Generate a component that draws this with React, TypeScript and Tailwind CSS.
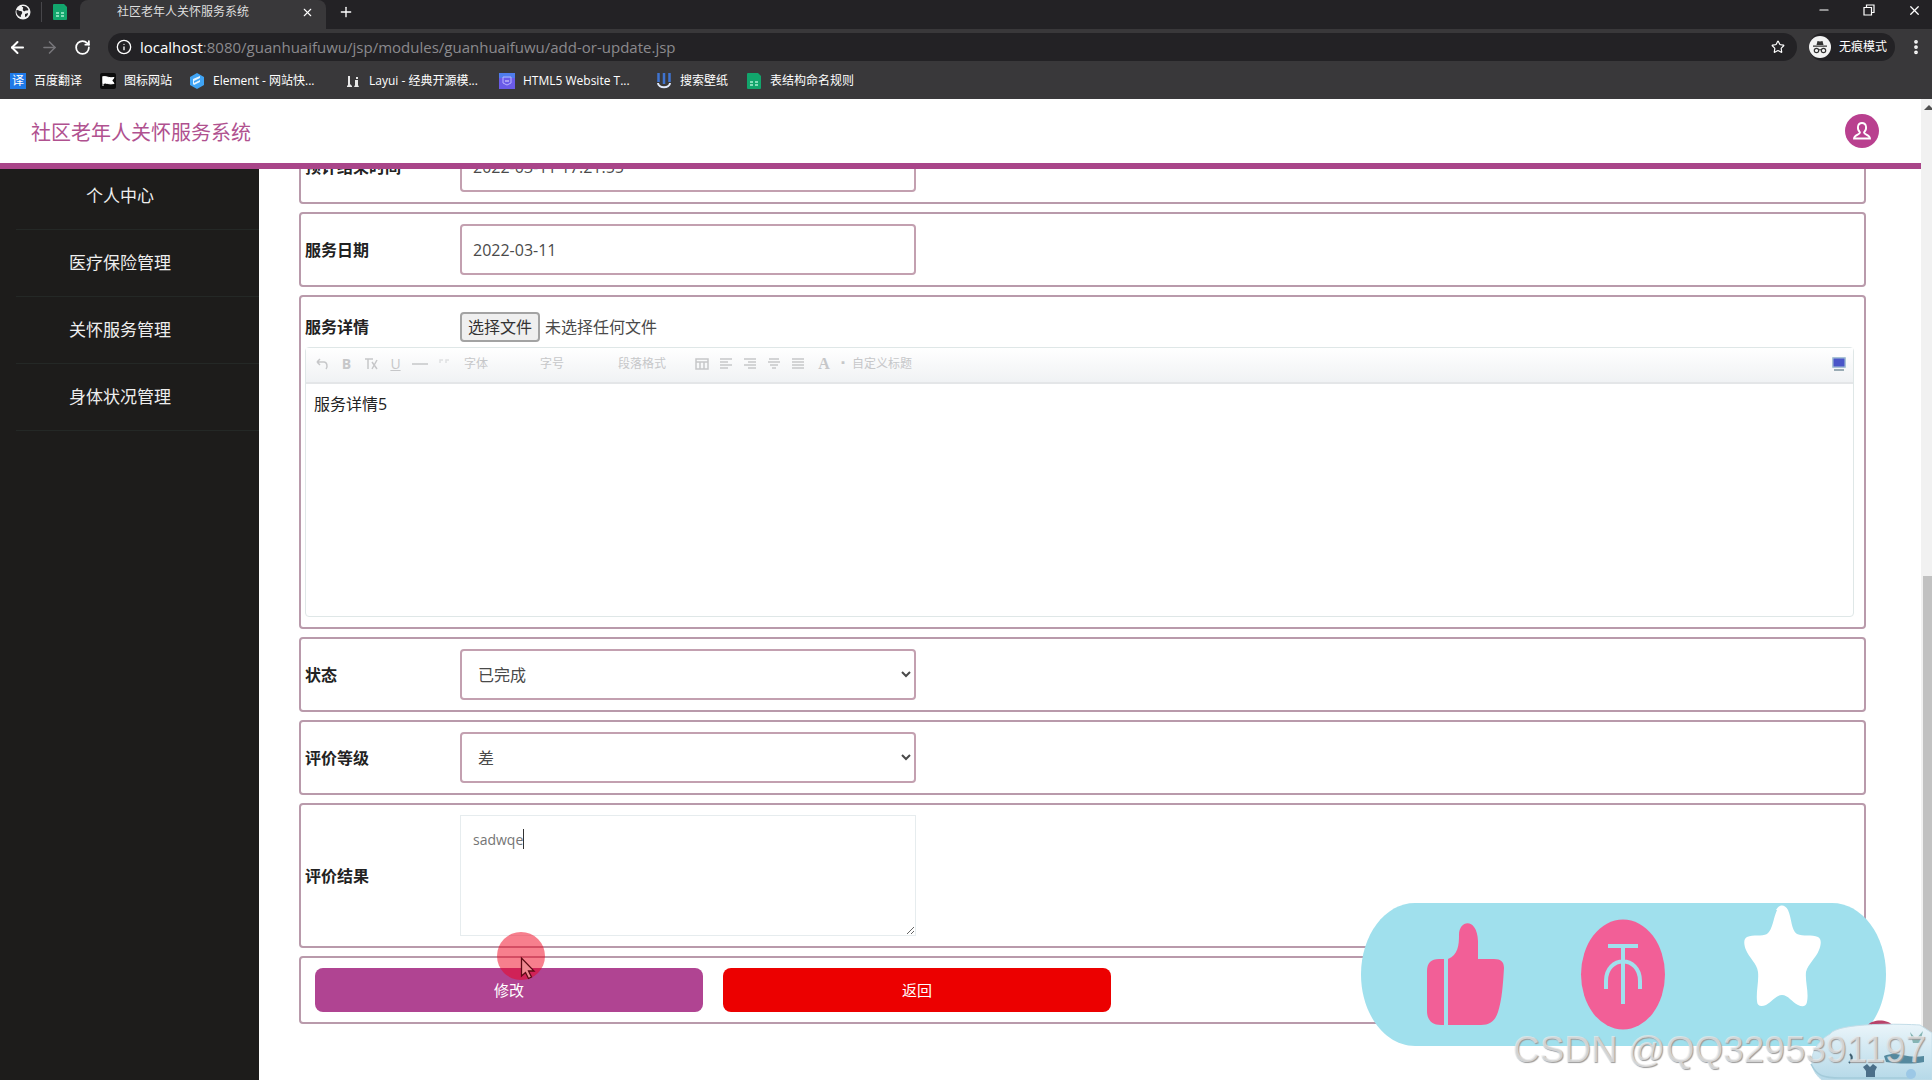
import { useRef } from 'react';
import type { ReactNode } from 'react';
import { ArrowLeft, ArrowRight, Info, Minus, MoreVertical, Plus, RotateCw, Star, X } from 'lucide-react';

const menu = ['个人中心', '医疗保险管理', '关怀服务管理', '身体状况管理'];

const card = 'rounded border-2 border-[#b99aab] bg-white';
const field =
  'h-[51px] w-[456px] rounded border-2 border-[#c3a0b0] bg-white text-base text-[#4a4a4a] outline-none';

function SheetIcon() {
  return (
    <svg viewBox="0 0 16 18" className="h-[18px] w-4 shrink-0">
      <path d="M2 1h10l3 3v12a1 1 0 0 1-1 1H2a1 1 0 0 1-1-1V2a1 1 0 0 1 1-1z" fill="#12a56c" />
      <path d="M4 10h3M9 10h3M4 13h3M9 13h3" stroke="#a8f0cf" strokeWidth="1.5" />
    </svg>
  );
}

function GlobeIcon() {
  return (
    <svg viewBox="0 0 16 16" className="h-4 w-4 shrink-0">
      <circle cx="8" cy="8" r="7.5" fill="#f1f1f1" />
      <path d="M1.500 6c2-.5 2.500 1 4 1s2 1 1.500 2.500-1.500 1-1 3.500C3 12.500 1 10 1.500 6z" fill="#242326" />
      <path d="M7 2c3-.5 5.500 1 6.500 4-1.500 1-2.500 0-3.500 1S7 6 8 4.500 6 3 7 2z" fill="#242326" />
      <path d="M10 10l3-1c0 2-1 3.500-3 4z" fill="#242326" />
    </svg>
  );
}

const bookmarks: { text: string; width: string; icon: ReactNode }[] = [
  {
    text: '百度翻译',
    width: 'w-[90px]',
    icon: (
      <span className="flex h-4 w-4 shrink-0 items-center justify-center bg-[#1f7ae8] text-xs leading-none text-white">
        译
      </span>
    ),
  },
  {
    text: '图标网站',
    width: 'w-[89px]',
    icon: (
      <svg viewBox="0 0 16 16" className="h-4 w-4 shrink-0">
        <rect width="16" height="16" rx="2" fill="#0c0c0c" />
        <path d="M3 3v10M3 4c3-1.500 5 1.500 11 .5l-2 3 2 3c-5 1.500-8-1.500-11 0z" fill="#fff" stroke="#fff" />
      </svg>
    ),
  },
  {
    text: 'Element - 网站快...',
    width: 'w-[156px]',
    icon: (
      <svg viewBox="0 0 16 16" className="h-4 w-4 shrink-0">
        <path d="M8 0l7 4v8l-7 4-7-4V4z" fill="#3fa4f5" />
        <path d="M4 6l7-3v2L5 8v2l6-3v2l-6 3-1-1z" fill="#e4f3ff" />
      </svg>
    ),
  },
  {
    text: 'Layui - 经典开源模...',
    width: 'w-[154px]',
    icon: (
      <svg viewBox="0 0 16 16" className="h-4 w-4 shrink-0">
        <path d="M3 3h2v8l2 2v1H2v-1l1-1zM11 4h2v2h-2zM10 7h3v5l1 2H9l1-2z" fill="#e8e8e8" />
      </svg>
    ),
  },
  {
    text: 'HTML5 Website T...',
    width: 'w-[157px]',
    icon: (
      <svg viewBox="0 0 16 16" className="h-4 w-4 shrink-0">
        <rect width="16" height="16" fill="#6a5be8" />
        <path d="M0 0h16v5H0z" fill="#4f7cec" />
        <path d="M4 4h8v6l-4 2-4-2z" fill="none" stroke="#b9b2ff" />
        <path d="M6 8h4" stroke="#e6e2ff" />
      </svg>
    ),
  },
  {
    text: '搜索壁纸',
    width: 'w-[90px]',
    icon: (
      <svg viewBox="0 0 16 16" className="h-4 w-4 shrink-0">
        <path d="M2.500 0v9M8 0v11M13.500 0v9" stroke="#3f73d0" strokeWidth="2.500" />
        <path d="M2 10c0 5.500 12 5.500 12 0" fill="none" stroke="#dfe8fa" strokeWidth="2" />
      </svg>
    ),
  },
  { text: '表结构命名规则', width: 'w-[120px]', icon: <SheetIcon /> },
];

function BrowserChrome() {
  return (
    <div className="shrink-0 bg-[#39383a] text-white">
      <div className="flex h-[29px] items-start bg-[#232225]">
        <div className="flex h-6 w-20 items-center gap-[10px] pl-[15px]">
          <GlobeIcon />
          <span className="h-5 w-px bg-[#47464a]" />
          <SheetIcon />
        </div>
        <div className="flex h-[29px] w-[246px] items-start rounded-t-lg bg-[#39383a] pr-3 pl-[37px]">
          <span className="flex h-6 flex-1 items-center text-xs text-[#dedede]">社区老年人关怀服务系统</span>
          <button type="button" aria-label="关闭标签页" className="flex h-6 items-center">
            <X size={13} />
          </button>
        </div>
        <button type="button" aria-label="新标签页" className="ml-3 flex h-6 items-center">
          <Plus size={16} />
        </button>
        <div className="ml-auto flex h-5 items-center gap-8 pr-[10px]">
          <button type="button" aria-label="最小化">
            <Minus size={14} strokeWidth={2} />
          </button>
          <button type="button" aria-label="还原">
            <svg viewBox="0 0 12 12" className="h-3 w-3" fill="none" stroke="currentColor" strokeWidth="1.200">
              <path d="M1 3.500h7.500V11H1zM3.500 3.500V1H11v7.500H8.500" />
            </svg>
          </button>
          <button type="button" aria-label="关闭">
            <X size={15} strokeWidth={2} />
          </button>
        </div>
      </div>

      <div className="flex h-9 items-center pr-[7px] pl-2">
        <button type="button" aria-label="后退" className="w-8">
          <ArrowLeft size={19} strokeWidth={2.5} />
        </button>
        <button type="button" aria-label="前进" className="w-8 text-[#77767a]">
          <ArrowRight size={19} strokeWidth={2} />
        </button>
        <button type="button" aria-label="重新加载" className="w-9 pl-0.5">
          <RotateCw size={17} strokeWidth={2.5} />
        </button>
        <div className="flex h-7 flex-1 items-center rounded-full bg-[#232225] pr-3 pl-2 text-[15px]">
          <Info size={16} strokeWidth={2} className="mr-2 shrink-0" />
          <label htmlFor="address">localhost</label>
          <input
            id="address"
            readOnly
            value=":8080/guanhuaifuwu/jsp/modules/guanhuaifuwu/add-or-update.jsp"
            className="min-w-0 flex-1 bg-transparent text-[#8b8a8e] outline-none"
          />
          <button type="button" aria-label="收藏">
            <Star size={14} strokeWidth={2} />
          </button>
        </div>
        <div className="ml-3 flex h-7 w-[86px] items-center gap-2 rounded-full bg-[#232225] text-xs whitespace-nowrap">
          <svg viewBox="0 0 22 22" className="h-[22px] w-[22px] shrink-0">
            <circle cx="11" cy="11" r="11" fill="#f3f3f3" />
            <path d="M7.500 9l1-4 2.500.6L13.500 5l1 4zM4 9.600h14v1.200H4z" fill="#333" />
            <circle cx="7.500" cy="14.500" r="2.200" fill="none" stroke="#333" strokeWidth="1.200" />
            <circle cx="14.500" cy="14.500" r="2.200" fill="none" stroke="#333" strokeWidth="1.200" />
            <path d="M9.700 14q1.300-.8 2.600 0" fill="none" stroke="#333" />
          </svg>
          无痕模式
        </div>
        <button type="button" aria-label="更多" className="ml-3">
          <MoreVertical size={18} strokeWidth={3} />
        </button>
      </div>

      <nav className="flex h-[34px] items-start pl-[10px]">
        {bookmarks.map((b) => (
          <a key={b.text} href="#" className={`flex h-8 items-center gap-2 text-xs whitespace-nowrap ${b.width}`}>
            {b.icon}
            {b.text}
          </a>
        ))}
      </nav>
    </div>
  );
}

function Row({ id, label, children }: { id: string; label: string; children: ReactNode }) {
  return (
    <div className={`flex items-center py-[10px] pl-1 ${card}`}>
      <label htmlFor={id} className="w-[155px] shrink-0 text-base font-bold text-[#222]">
        {label}
      </label>
      {children}
    </div>
  );
}

function ToolButton({ label, children }: { label: string; children: ReactNode }) {
  return (
    <button type="button" aria-label={label} className="flex h-6 w-6 shrink-0 items-center justify-center">
      <svg viewBox="0 0 16 16" className="h-4 w-4" fill="none" stroke="currentColor" strokeWidth="1.500">
        {children}
      </svg>
    </button>
  );
}

function Editor() {
  return (
    <div className="mr-[10px] rounded border border-[#dfe7e7]">
      <div className="flex h-9 items-center border-b-2 border-[#e4e6e8] bg-linear-to-b from-white to-[#f0f2f4] pr-[6px] pb-[3px] pl-1 text-[#c6c7c9]">
        <ToolButton label="撤销">
          <path d="M3 6h7a3 4 0 0 1 2 7M3 6l3-3M3 6l3 3" />
        </ToolButton>
        <button type="button" className="h-6 w-[25px] shrink-0 text-sm font-bold">
          B
        </button>
        <ToolButton label="清除格式">
          <path d="M2 3h8M5 3v10M9 6l5 7M14 4l-5 9" />
        </ToolButton>
        <button type="button" className="h-6 w-[25px] shrink-0 text-sm underline">
          U
        </button>
        <ToolButton label="分隔线">
          <path d="M0 8h16" />
        </ToolButton>
        <ToolButton label="引用">
          <path d="M4 7V4h3M10 7V4h3" opacity=".5" />
        </ToolButton>
        <select aria-label="字体" className="ml-2 w-[76px] shrink-0 appearance-none text-xs">
          <option>字体</option>
        </select>
        <select aria-label="字号" className="w-[78px] shrink-0 appearance-none text-xs">
          <option>字号</option>
        </select>
        <select aria-label="段落格式" className="w-[72px] shrink-0 appearance-none text-xs">
          <option>段落格式</option>
        </select>
        <ToolButton label="日期">
          <path d="M2 3h12v10H2zM2 6h12M6 6v7M10 6v7" />
        </ToolButton>
        <ToolButton label="左对齐">
          <path d="M2 3h12M2 6h8M2 9h12M2 12h8" />
        </ToolButton>
        <ToolButton label="右对齐">
          <path d="M2 3h12M6 6h8M2 9h12M6 12h8" />
        </ToolButton>
        <ToolButton label="居中">
          <path d="M3 3h10M2 6h12M4 9h8M6 12h4" />
        </ToolButton>
        <ToolButton label="两端对齐">
          <path d="M2 3h12M2 6h12M2 9h12M2 12h12" />
        </ToolButton>
        <button type="button" className="h-6 w-7 shrink-0 font-['Liberation_Serif',serif] text-base font-bold">
          A
        </button>
        <span className="w-[14px] shrink-0 text-[10px]">▪</span>
        <button type="button" className="shrink-0 text-xs whitespace-nowrap">
          自定义标题
        </button>
        <button type="button" aria-label="全屏" className="ml-auto">
          <svg viewBox="0 0 16 16" className="h-4 w-4">
            <rect x="1" y="1" width="14" height="11" rx="1" fill="#a9c3d6" />
            <rect x="2.500" y="2.500" width="11" height="8" fill="#4a56c8" />
            <path d="M3 14h10" stroke="#9aacb5" strokeWidth="2" />
          </svg>
        </button>
      </div>
      <textarea
        aria-label="服务详情内容"
        defaultValue="服务详情5"
        className="block h-[232px] w-full resize-none px-2 py-2 text-base leading-6 text-[#222] outline-none"
      />
    </div>
  );
}

function ServiceForm() {
  const file = useRef<HTMLInputElement>(null);

  return (
    <form className="-mt-10 flex flex-col gap-2">
      <Row id="end" label="预计结束时间">
        <input id="end" defaultValue="2022-03-11 17:21:55" className={`${field} px-[11px]`} />
      </Row>
      <Row id="date" label="服务日期">
        <input id="date" defaultValue="2022-03-11" className={`${field} px-[11px]`} />
      </Row>

      <div className={`pt-[15px] pb-[10px] pl-1 ${card}`}>
        <div className="mb-[5px] flex h-[30px] items-center text-base text-[#4a4a4a]">
          <label htmlFor="file" className="w-[155px] shrink-0 font-bold text-[#222]">
            服务详情
          </label>
          <input ref={file} id="file" type="file" className="hidden" />
          <button
            type="button"
            onClick={() => file.current?.click()}
            className="mr-[5px] h-[30px] rounded-sm border-2 border-[#a3a3a3] bg-[#efefef] px-[6px] leading-none text-[#333]"
          >
            选择文件
          </button>
          未选择任何文件
        </div>
        <Editor />
      </div>

      <Row id="state" label="状态">
        <select id="state" className={`${field} pl-3`}>
          <option>已完成</option>
        </select>
      </Row>
      <Row id="grade" label="评价等级">
        <select id="grade" className={`${field} pl-3`}>
          <option>差</option>
        </select>
      </Row>
      <Row id="result" label="评价结果">
        <div className="relative">
          <textarea
            id="result"
            defaultValue="sadwqe"
            className="block h-[121px] w-[456px] border border-[#e6ecee] px-3 py-[14px] text-sm text-[#757575] outline-none"
          />
          <span className="absolute top-[14px] left-[63px] h-5 w-px bg-[#333]" />
        </div>
      </Row>

      <div className={`relative flex gap-5 py-[10px] pl-[14px] ${card}`}>
        <button type="button" className="h-11 w-[388px] rounded-lg bg-[#b04492] text-[15px] text-white">
          修改
        </button>
        <button type="button" className="h-11 w-[388px] rounded-lg bg-[#ec0000] text-[15px] text-white">
          返回
        </button>
        {/* click highlight and pointer */}
        <svg viewBox="0 0 48 48" className="pointer-events-none absolute -top-[26px] left-[196px] h-12 w-12">
          <circle cx="24" cy="24" r="24" fill="#f0001c" fillOpacity=".5" />
          <path
            d="M24.500 26v18l4-3.500 3 6 3-1.500-3-6h5.500z"
            fill="#f08a92"
            stroke="#5c0a14"
            strokeWidth="1.300"
          />
        </svg>
      </div>
    </form>
  );
}

function LikeBanner() {
  return (
    <svg viewBox="0 0 525 143" className="absolute right-[46px] bottom-[34px] h-[143px] w-[525px]">
      <path d="M54 0H471C501 0 525 32 525 71.500S501 143 471 143H54C24 143 0 111 0 71.500S24 0 54 0z" fill="#a0e0ed" />
      <path
        d="M66 68c0-8 4-12 12-12h5v66h-3c-9 0-14-5-14-14zM87 122V56c10-4 11-14 11-24 0-15 18-18 19 6v18h16c7 0 10 3 10 9-1 16-2 32-6 44-3 9-8 13-17 13z"
        fill="#f25f97"
      />
      <ellipse cx="262" cy="71.500" rx="42" ry="55" fill="#f25f97" />
      <path d="M247 43h30M262 43v58M245 86V78c0-26 34-26 34 0v8" fill="none" stroke="#a0e0ed" strokeWidth="4" />
      <path
        d="M415 7c3-6 9-6 12 0 4 9 3 20 9 24 6 3 15 0 21 3 4 2 3 8 1 13-3 8-11 14-13 22-1 10 3 20 1 30-1 5-5 5-9 3-6-3-10-10-16-10s-10 7-16 10c-5 2-9 1-9-4-1-10 2-19 1-29-1-9-9-14-12-22-2-5-3-11 1-13 6-3 15 0 20-3 6-5 6-15 10-24z"
        fill="#fff"
      />
    </svg>
  );
}

// skinned input method bar in the corner of the desktop
function ImeBar() {
  return (
    <svg viewBox="0 0 124 60" className="absolute right-0 bottom-0 h-[60px] w-[124px]">
      <defs>
        <linearGradient id="ice" x1="0" y1="0" x2="0" y2="1">
          <stop offset="0" stopColor="#eaf5fa" />
          <stop offset="1" stopColor="#b5d9e8" />
        </linearGradient>
      </defs>
      <path d="M60 5c4-6 20-6 24 0z" fill="#b8436a" />
      <path d="M22 14C30 2 95 4 112 5l12 8v47H14C-4 46 4 24 22 14z" fill="url(#ice)" stroke="#c3dde8" />
      <path d="M3 44c6 12 12 14 30 14h70" fill="none" stroke="#a4cbda" strokeWidth="1.500" />
      <path d="M76 36c14-6 20 3 40 0v6c-14 3-30 1-38 0z" fill="#55899e" />
      <path d="M102 12l6 7 7-8-3 12h-7z" fill="#86b5b4" />
      <path d="M55 47l4-3 3 3 3-3 4 3-2 4v6h-9v-6z" fill="#4b6f89" />
      <path d="M42 34q4 4-1 9" fill="none" stroke="#3f5f70" strokeWidth="2" />
      <circle cx="103" cy="54" r="5" fill="#9cc8e6" />
    </svg>
  );
}

export default function App() {
  return (
    <div className="relative flex h-screen w-full flex-col overflow-hidden bg-white font-['Open_Sans','Noto_Sans_CJK_SC',sans-serif]">
      <BrowserChrome />

      <div className="flex min-h-0 flex-1">
        <div className="flex min-w-0 flex-1 flex-col">
          <header className="flex h-[70px] shrink-0 items-center justify-between border-b-[6px] border-[#a94589] pr-[42px] pl-[31px]">
            <h1 className="pt-[3px] text-xl text-[#b0518f]">社区老年人关怀服务系统</h1>
            <a
              href="#"
              aria-label="个人中心"
              className="flex h-[34px] w-[34px] items-center justify-center rounded-full bg-[#b9408f]"
            >
              <svg viewBox="0 0 18 18" className="h-[18px] w-[18px]" fill="none" stroke="#fff" strokeWidth="1.800">
                <path d="M7 10.500C3.500 7 4.500 1 9 1s5.500 6 2 9.500c0 2 6 2.500 6 6H1c0-3.500 6-4 6-6z" />
              </svg>
            </a>
          </header>

          <div className="flex min-h-0 flex-1">
            <aside className="w-[259px] shrink-0 overflow-hidden bg-[#1d1c1b]">
              <ul className="-mt-[6px]">
                {menu.map((item) => (
                  <li key={item} className="ml-4 h-[67px] border-b border-[#242826]">
                    <a href="#" className="flex h-full items-center justify-center pr-[35px] text-[17px] text-[#eee]">
                      {item}
                    </a>
                  </li>
                ))}
              </ul>
            </aside>
            <main className="min-w-0 flex-1 overflow-hidden pr-[55px] pl-10">
              <ServiceForm />
            </main>
          </div>
        </div>

        {/* page scrollbar */}
        <div className="flex w-[11px] shrink-0 flex-col justify-between bg-[#f1f1f1] pl-0.5">
          <svg viewBox="0 0 9 16" className="h-4 w-[9px]">
            <path d="M1 11l5-5 5 5z" fill="#505050" />
          </svg>
          <div className="h-[504px] bg-[#c1c1c1]" />
        </div>
      </div>

      <LikeBanner />
      <ImeBar />
      <p className="absolute right-[6px] bottom-2 font-['Liberation_Sans',sans-serif] text-[37px] leading-[44px] whitespace-nowrap text-[#ececec]/70 [text-shadow:1px_1px_1px_#9a9a9a]">
        CSDN @QQ3295391197
      </p>
    </div>
  );
}
